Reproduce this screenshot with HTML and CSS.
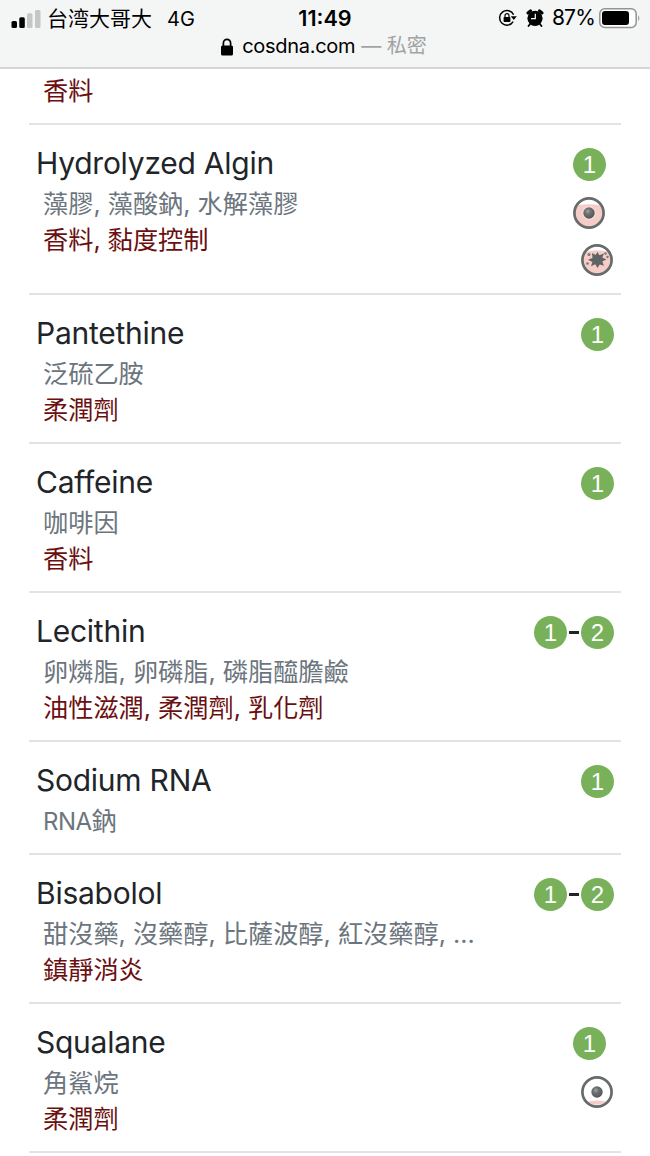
FILE: index.html
```html
<!DOCTYPE html>
<html lang="zh-Hant">
<head>
    <meta charset="UTF-8">
    <meta name="viewport" content="width=device-width, initial-scale=1.0">
    <title>cosdna.com</title>
    <link rel="stylesheet" href="styles.css">
</head>
<body>
    <!-- shared icons -->
    <svg class="defs" width="0" height="0">
        <defs>
            <radialGradient id="ball" cx="40%" cy="35%" r="65%">
                <stop offset="0" stop-color="#a5a8a8"/>
                <stop offset="0.35" stop-color="#707373"/>
                <stop offset="1" stop-color="#535656"/>
            </radialGradient>
            <symbol id="acne" viewBox="0 0 34 34">
                <circle cx="17" cy="17" r="14.6" fill="#fff"/>
                <path d="M5 9.5Q17 7 29 9.5A14.2 14.2 0 1 1 5 9.5Z" fill="#f4cdc8"/>
                <circle cx="17" cy="17" r="14.6" fill="none" stroke="#686b6b" stroke-width="2.7"/>
                <circle cx="17" cy="17" r="7" fill="#f8dcd8"/>
                <circle cx="17" cy="17" r="5.7" fill="url(#ball)"/>
            </symbol>
            <symbol id="acne-low" viewBox="0 0 34 34">
                <circle cx="17" cy="17" r="14.6" fill="#fff"/>
                <path d="M8 26.5Q17 24.5 26 26.5A14 14 0 0 1 8 26.5Z" fill="#f4cdc8"/>
                <circle cx="17" cy="17" r="14.6" fill="none" stroke="#686b6b" stroke-width="2.7"/>
                <circle cx="17" cy="17" r="5.7" fill="url(#ball)"/>
            </symbol>
            <symbol id="irritant" viewBox="0 0 34 34">
                <circle cx="17" cy="17" r="14.6" fill="#fff"/>
                <path d="M5.5 9Q17 5.5 28.5 9A14.2 14.2 0 1 1 5.5 9Z" fill="#f4cdc8"/>
                <circle cx="17" cy="17" r="14.6" fill="none" stroke="#686b6b" stroke-width="2.7"/>
                <path d="M12 10l3.6 2L17.5 9l1.8 3.2 4.7-1.7-1.7 4 4 2-4 2 1.7 4.2-4.3-1.3L17.5 25l-2.2-3.8-4.3 2 1.4-4.3-4.4-2.2 4.5-1.7z" fill="#606363"/>
                <circle cx="9" cy="11.5" r="1.5" fill="#777a7a"/>
                <circle cx="25.5" cy="10.5" r="1.3" fill="#777a7a"/>
                <circle cx="27.5" cy="14" r="1.2" fill="#777a7a"/>
                <circle cx="7.5" cy="20.5" r="1.3" fill="#777a7a"/>
            </symbol>
        </defs>
    </svg>

    <header class="topbar">
        <div class="status">
            <div class="carrier">
                <svg width="30" height="20" viewBox="0 0 30 20">
                    <rect x="0.5" y="12" width="5.5" height="7" rx="1.5" fill="#000"/>
                    <rect x="8.3" y="8.3" width="5.5" height="10.7" rx="1.5" fill="#000"/>
                    <rect x="16" y="4.3" width="5.5" height="14.7" rx="1.5" fill="#c5c6c6"/>
                    <rect x="24" y="1" width="5.5" height="18" rx="1.5" fill="#c5c6c6"/>
                </svg>
                <span class="operator">台湾大哥大</span>
                <span>4G</span>
            </div>
            <div class="clock">11:49</div>
            <div class="indicators">
                <svg class="rotation" width="20" height="18" viewBox="0 0 20 18">
                    <path d="M15.2 12.6A7.3 7.3 0 1 1 15.6 5.8" fill="none" stroke="#000" stroke-width="1.5"/>
                    <path d="M12.8 7.2h6L15.8 11z" fill="#000"/>
                    <rect x="5.6" y="8" width="6.8" height="5" rx=".7" fill="#000"/>
                    <path d="M7 8.5V6.7a2 2 0 0 1 4 0v1.8" fill="none" stroke="#000" stroke-width="1.2"/>
                </svg>
                <svg class="alarm" width="18" height="18" viewBox="0 0 18 18">
                    <circle cx="9" cy="9.3" r="7.6" fill="#000"/>
                    <path d="M2 4L4.5 1.8M16 4L13.5 1.8" stroke="#000" stroke-width="3" stroke-linecap="round"/>
                    <path d="M4.5 14.5l-2 2.5M13.5 14.5l2 2.5" stroke="#000" stroke-width="1.8" stroke-linecap="round"/>
                    <path d="M9.3 4.8v4.9H5" fill="none" stroke="#fff" stroke-width="1.2"/>
                </svg>
                <span class="percent">87%</span>
                <svg width="42" height="21" viewBox="0 0 42 21">
                    <rect x="0.8" y="0.8" width="36.4" height="18.6" rx="5" fill="#fff" stroke="#929494" stroke-width="1.5"/>
                    <rect x="3" y="3" width="27" height="14" rx="3" fill="#000"/>
                    <path d="M39.2 7.2q2.3 3 0 6z" fill="#929494"/>
                </svg>
            </div>
        </div>
        <div class="address">
            <svg width="12" height="18" viewBox="0 0 12 18">
                <rect x="0" y="7.5" width="12" height="10" rx="1.5" fill="#000"/>
                <path d="M2.4 8.5V5a3.6 3.6 0 0 1 7.2 0v3.5" fill="none" stroke="#000" stroke-width="1.7"/>
            </svg>
            <span class="domain">cosdna.com</span>
            <span class="private">— 私密</span>
        </div>
    </header>

    <main class="list">
        <div class="item item-cut">
            <div class="info">
                <div class="func">香料</div>
            </div>
        </div>
        <div class="item">
            <div class="info">
                <div class="name">Hydrolyzed Algin</div>
                <div class="alias">藻膠, 藻酸鈉, 水解藻膠</div>
                <div class="func">香料, 黏度控制</div>
            </div>
            <div class="marks">
                <div class="mark shift"><span class="badge">1</span></div>
                <div class="mark shift"><svg class="icon"><use href="#acne"/></svg></div>
                <div class="mark"><svg class="icon"><use href="#irritant"/></svg></div>
            </div>
        </div>
        <div class="item">
            <div class="info">
                <div class="name">Pantethine</div>
                <div class="alias">泛硫乙胺</div>
                <div class="func">柔潤劑</div>
            </div>
            <div class="marks">
                <div class="mark"><span class="badge">1</span></div>
            </div>
        </div>
        <div class="item">
            <div class="info">
                <div class="name">Caffeine</div>
                <div class="alias">咖啡因</div>
                <div class="func">香料</div>
            </div>
            <div class="marks">
                <div class="mark"><span class="badge">1</span></div>
            </div>
        </div>
        <div class="item">
            <div class="info">
                <div class="name">Lecithin</div>
                <div class="alias">卵燐脂, 卵磷脂, 磷脂醯膽鹼</div>
                <div class="func">油性滋潤, 柔潤劑, 乳化劑</div>
            </div>
            <div class="marks">
                <div class="mark"><span class="badge">1</span><span class="dash"></span><span class="badge">2</span></div>
            </div>
        </div>
        <div class="item">
            <div class="info">
                <div class="name">Sodium RNA</div>
                <div class="alias"><span class="latin">RNA</span>鈉</div>
            </div>
            <div class="marks">
                <div class="mark"><span class="badge">1</span></div>
            </div>
        </div>
        <div class="item">
            <div class="info">
                <div class="name">Bisabolol</div>
                <div class="alias">甜沒藥, 沒藥醇, 比薩波醇, 紅沒藥醇, ...</div>
                <div class="func">鎮靜消炎</div>
            </div>
            <div class="marks">
                <div class="mark"><span class="badge">1</span><span class="dash"></span><span class="badge">2</span></div>
            </div>
        </div>
        <div class="item">
            <div class="info">
                <div class="name">Squalane</div>
                <div class="alias">角鯊烷</div>
                <div class="func">柔潤劑</div>
            </div>
            <div class="marks">
                <div class="mark shift"><span class="badge">1</span></div>
                <div class="mark"><svg class="icon"><use href="#acne-low"/></svg></div>
            </div>
        </div>
    </main>
</body>
</html>
```
FILE: styles.css
```css
*{
    margin: 0;
    padding: 0;
    box-sizing: border-box;
}
body{
    height: 1156px;
    overflow: hidden;
    background-color: #fff;
    color: #212529;
    font-family: Inter, "Noto Sans CJK TC", sans-serif;
}
svg{
    display: block;
    flex: none;
}
.defs{
    position: absolute;
}
.topbar{
    height: 69px;
    padding-top: 4px;
    background-color: #f4f5f5;
    border-bottom: 2px solid #d4d5d5;
    color: #000;
}
.status{
    display: grid;
    grid-template-columns: 1fr auto 1fr;
    align-items: center;
    height: 28px;
    padding: 0 9px 0 11px;
    font-size: 21px;
    line-height: 26px;
    white-space: nowrap;
}
.carrier{
    display: flex;
    align-items: center;
    font-size: 20px;
}
.operator{
    margin: 0 15px 3px 6px;
    font-family: "Noto Sans CJK SC", sans-serif;
    font-size: 21px;
}
.clock{
    margin: 0 2px 2px 0;
    font-weight: 600;
    font-size: 21.6px;
}
.indicators{
    display: flex;
    align-items: center;
    justify-content: flex-end;
    padding-bottom: 1px;
}
.alarm{
    margin: 0 8px;
}
.percent{
    margin-right: 4px;
    letter-spacing: -0.8px;
}
.address{
    display: flex;
    align-items: center;
    justify-content: center;
    height: 29px;
    padding-right: 2px;
    font-size: 20px;
    line-height: 29px;
}
.domain{
    margin: 0 6px 0 9px;
    letter-spacing: -0.3px;
}
.private{
    color: #a2a3a3;
}
.list{
    margin: 0 29px;
}
.item{
    display: flex;
    justify-content: space-between;
    padding: 15.6px 7px 13.5px;
    border-bottom: 2px solid #e2e3e4;
}
.item-cut{
    padding-top: 4.4px;
}
.name{
    font-size: 30px;
    line-height: 45px;
    letter-spacing: -0.25px;
}
.alias, .func{
    padding-left: 7px;
    font-size: 25.2px;
    line-height: 36.4px;
    white-space: nowrap;
}
.alias{
    color: #6c757d;
}
.func{
    color: #6b0f0f;
}
.latin{
    font-size: 24px;
    letter-spacing: -0.5px;
}
.marks{
    display: flex;
    flex-direction: column;
    align-items: flex-end;
    margin-bottom: -3.8px;
}
.mark{
    display: flex;
    align-items: center;
    height: 47px;
}
.mark:first-child{
    margin-bottom: 1.6px;
}
.shift{
    margin-right: 8px;
}
.badge{
    width: 33px;
    height: 33px;
    border-radius: 50%;
    background-color: #78b159;
    color: #fff;
    font-family: "Liberation Sans", sans-serif;
    font-size: 24px;
    line-height: 34px;
    text-align: center;
}
.dash{
    width: 10px;
    height: 3px;
    margin: 0 2px;
    background-color: #212529;
}
.icon{
    width: 34px;
    height: 34px;
}
```
